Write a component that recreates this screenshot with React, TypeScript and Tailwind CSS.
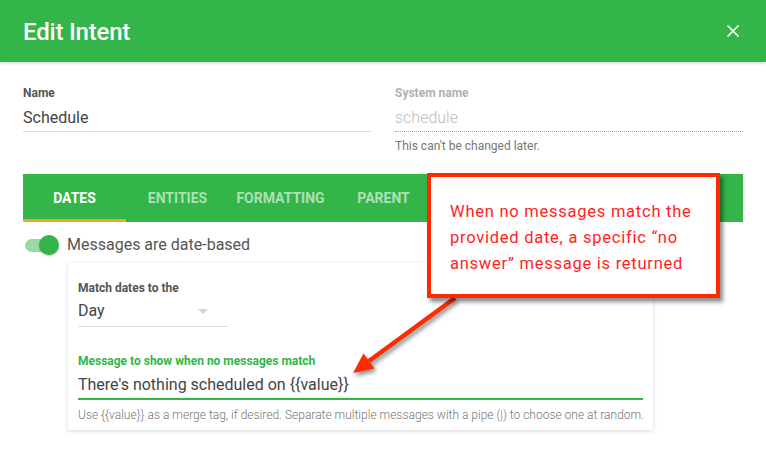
import { X } from 'lucide-react'

const tabs = ['Dates', 'Entities', 'Formatting', 'Parent']

function Field({
  label,
  value,
  muted = false,
  hint
}: {
  label: string
  value: string
  muted?: boolean
  hint?: string
}) {
  return (
    <div className="w-[348px]">
      <div
        className={`text-[12px] leading-[14px] font-bold ${muted ? 'text-[#b0b0b0]' : 'text-[#555]'}`}
      >
        {label}
      </div>
      <div
        className={`mt-[8px] pb-[3px] text-[16px] leading-[20px] ${
          muted
            ? 'text-[#bdbdbd] font-light border-b border-dotted border-[#9e9e9e]'
            : 'text-[#444] border-b border-[#ddd]'
        }`}
      >
        {value}
      </div>
      {hint && (
        <div className="mt-[7px] text-[12px] leading-[14px] text-[#777]">{hint}</div>
      )}
    </div>
  )
}

export default function App() {
  return (
    <div
      className="relative w-[766px] h-[457px] overflow-hidden bg-white"
      style={{ fontFamily: 'Roboto, "Noto Sans", sans-serif' }}
    >
      {/* header */}
      <div className="h-[62px] bg-[#33b549] flex items-center justify-between pl-[23px] pr-[23px] shadow-[0_1px_3px_rgba(0,0,0,0.2)]">
        <h1 className="pt-[1px] text-[24px] font-medium text-white tracking-[-0.2px]">Edit Intent</h1>
        <X className="w-[20px] h-[20px] text-white" strokeWidth={2} />
      </div>

      <div className="px-[23px]">
        <div className="mt-[24px] flex gap-[24px]">
          <Field label="Name" value="Schedule" />
          <Field
            label="System name"
            value="schedule"
            muted
            hint="This can't be changed later."
          />
        </div>

        {/* tabs */}
        <div className="mt-[21px] h-[48px] w-[720px] bg-[#33b549] flex">
          {tabs.map((t, i) => (
            <div
              key={t}
              className={`w-[103px] h-full flex items-center justify-center text-[14px] font-bold uppercase ${
                i === 0 ? 'text-white border-b-[3px] border-[#f6a623] pt-[3px]' : 'text-white/60'
              }`}
            >
              {t}
            </div>
          ))}
        </div>

        {/* toggle */}
        <div className="mt-[11px] h-[24px] flex items-center">
          <div className="relative w-[36px] h-[20px] flex items-center">
            <div className="ml-[2px] w-[30px] h-[13px] rounded-full bg-[#99dba3]" />
            <div className="absolute left-[16px] top-0 w-[20px] h-[20px] rounded-full bg-[#33b549] shadow-[0_1px_2px_rgba(0,0,0,0.25)]" />
          </div>
          <span className="ml-[8px] text-[16px] text-[#555]">Messages are date-based</span>
        </div>

        {/* card */}
        <div className="mt-[6px] ml-[45px] w-[585px] h-[167px] bg-white rounded-[2px] shadow-[0_1px_4px_rgba(0,0,0,0.16)] px-[10px] pt-[18px]">
          <div className="text-[12px] leading-[14px] font-bold text-[#555]">Match dates to the</div>
          <div className="mt-[6px] w-[150px] pb-[5px] border-b border-[#e0dadd] flex items-center justify-between">
            <span className="text-[16px] leading-[20px] text-[#444]">Day</span>
            <span className="mr-[20px] w-0 h-0 border-l-[5px] border-r-[5px] border-t-[5px] border-l-transparent border-r-transparent border-t-[#d8d2d6]" />
          </div>

          <div className="mt-[27px] text-[12px] leading-[14px] font-bold text-[#33b549]">
            Message to show when no messages match
          </div>
          <div className="mt-[7px] pb-[3px] border-b-2 border-[#33b549] text-[16px] leading-[20px] text-[#444]">
            There's nothing scheduled on {'{{value}}'}
          </div>
          <div className="mt-[8px] whitespace-nowrap text-[12px] leading-[14px] font-light text-[#777]">
            Use {'{{value}}'} as a merge tag, if desired. Separate multiple messages with a pipe (|) to
            choose one at random.
          </div>
        </div>
      </div>

      {/* annotation arrow */}
      <svg
        className="absolute left-0 top-0 w-[766px] h-[457px] pointer-events-none drop-shadow-[2px_3px_2px_rgba(0,0,0,0.45)]"
        viewBox="0 0 766 457"
      >
        <line x1="455" y1="298" x2="369" y2="361" stroke="#ff2a00" strokeWidth="4.5" />
        <polygon points="353,373 374.5,368.5 363.5,353.5" fill="#ff2a00" />
      </svg>

      {/* annotation box */}
      <div className="absolute left-[427px] top-[173px] w-[293px] h-[125px] bg-white border-[4px] border-[#ff2a00] shadow-[3px_4px_4px_rgba(0,0,0,0.45)] pl-[19px] pt-[22px]">
        <p className="whitespace-nowrap text-[16.5px] leading-[26px] tracking-[0.75px] text-[#ff1e1e]">
          When no messages match the
          <br />
          provided date, a specific “no
          <br />
          answer” message is returned
        </p>
      </div>
    </div>
  )
}
